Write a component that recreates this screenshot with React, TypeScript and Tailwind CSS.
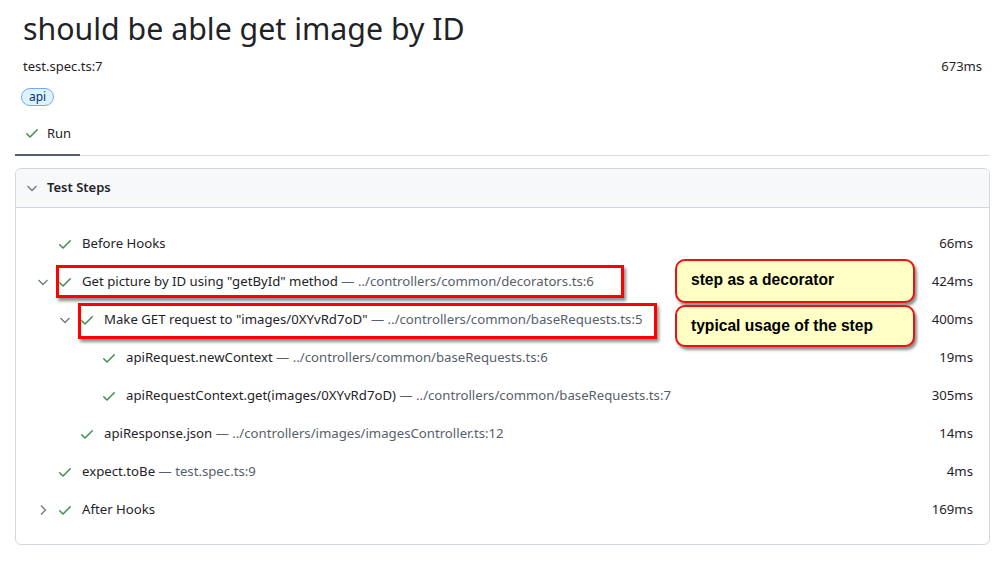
import React from "react";

const Check = ({ className = "" }: { className?: string }) => (
  <svg viewBox="0 0 16 16" width="16" height="16" className={className}>
    <path d="M13.78 4.22a.75.75 0 0 1 0 1.06l-7.25 7.25a.75.75 0 0 1-1.06 0L2.22 9.28a.751.751 0 0 1 1.06-1.06L6 10.94l6.72-6.72a.75.75 0 0 1 1.06 0Z" fill="#3f8f4c" />
  </svg>
);

const ChevronDown = () => (
  <svg viewBox="0 0 16 16" width="16" height="16">
    <path d="M3.5 6l4.5 4.5L12.5 6" fill="none" stroke="#6e7781" strokeWidth="1.3" />
  </svg>
);
const ChevronRight = () => (
  <svg viewBox="0 0 16 16" width="16" height="16">
    <path d="M6 3.5l4.5 4.5L6 12.5" fill="none" stroke="#6e7781" strokeWidth="1.3" />
  </svg>
);

type Step = { depth: number; title: string; loc?: string; dur: string; chev?: "down" | "right" };

const steps: Step[] = [
  { depth: 0, title: "Before Hooks", dur: "66ms" },
  { depth: 0, title: 'Get picture by ID using "getById" method', loc: "../controllers/common/decorators.ts:6", dur: "424ms", chev: "down" },
  { depth: 1, title: 'Make GET request to "images/0XYvRd7oD"', loc: "../controllers/common/baseRequests.ts:5", dur: "400ms", chev: "down" },
  { depth: 2, title: "apiRequest.newContext", loc: "../controllers/common/baseRequests.ts:6", dur: "19ms" },
  { depth: 2, title: "apiRequestContext.get(images/0XYvRd7oD)", loc: "../controllers/common/baseRequests.ts:7", dur: "305ms" },
  { depth: 1, title: "apiResponse.json", loc: "../controllers/images/imagesController.ts:12", dur: "14ms" },
  { depth: 0, title: "expect.toBe", loc: "test.spec.ts:9", dur: "4ms" },
  { depth: 0, title: "After Hooks", dur: "169ms", chev: "right" },
];

export default function App() {
  return (
    <div className="min-h-[565px] bg-white pl-[15px] pr-[8px] pt-[8px] text-[#1f2328]" style={{ fontFamily: "'Noto Sans', 'Open Sans', sans-serif" }}>
      <div className="px-[8px]">
        <h1 className="text-[30.3px] leading-[42px] font-normal text-[#1f2328]">should be able get image by ID</h1>
        <div className="mt-[6px] flex justify-between text-[13px] leading-[20px]">
          <span>test.spec.ts:7</span>
          <span>673ms</span>
        </div>
        <div className="mt-[12px] -ml-[2px] flex">
          <span className="rounded-full border border-[#76a9fa] bg-[#ddf4ff] px-[7px] text-[12px] leading-[16px] text-[#0a3069]">api</span>
        </div>
      </div>
      <div className="mt-[9px] flex border-b border-[#d8dee4]">
        <div className="-mb-px flex items-center gap-[7px] border-b-2 border-[#57606a] pl-[9px] pr-[9px] pb-[11px] pt-[8px] text-[13px] leading-[20px]">
          <Check />
          <span>Run</span>
        </div>
      </div>
      <div className="relative mt-[12px] rounded-[6px] border border-[#d0d7de]">
        <div className="flex h-[39px] items-center gap-[7px] rounded-t-[6px] border-b border-[#d0d7de] bg-[#f6f8fa] pl-[8px] text-[13px] font-semibold">
          <ChevronDown />
          <span>Test Steps</span>
        </div>
        <div className="pt-[17px] pb-[15px]">
          {steps.map((s, i) => (
            <div key={i} className="flex h-[38px] items-center pr-[16px] text-[13.2px]" style={{ paddingLeft: 16 + s.depth * 22 }}>
              <span className="flex w-[22px] justify-center">
                {s.chev === "down" ? <ChevronDown /> : s.chev === "right" ? <ChevronRight /> : null}
              </span>
              <span className="flex w-[22px] justify-center"><Check /></span>
              <span className="ml-[6px] flex-1 whitespace-nowrap">
                {s.title}
                {s.loc && <span className="text-[#57606a]"> — {s.loc}</span>}
              </span>
              <span className="text-[#1f2328]">{s.dur}</span>
            </div>
          ))}
        </div>
        <div className="pointer-events-none absolute left-[40px] top-[96px] h-[33px] w-[568px] border-[3px] border-[#ff0000] shadow-[2px_3px_3px_rgba(0,0,0,0.45)]" />
        <div className="pointer-events-none absolute left-[62px] top-[134px] h-[36px] w-[579px] border-[3px] border-[#ff0000] shadow-[2px_3px_3px_rgba(0,0,0,0.45)]" />
        <div className="absolute left-[659px] top-[90px] flex h-[44px] w-[240px] items-center rounded-[10px] border-2 border-[#ee1111] bg-[#ffffc6] pl-[14px] pb-[2px] text-[15.6px] font-bold text-black shadow-[2px_3px_3px_rgba(0,0,0,0.45)]" style={{ fontFamily: "'Liberation Sans', Arial, sans-serif" }}>
          step as a decorator
        </div>
        <div className="absolute left-[659px] top-[136px] flex h-[42px] w-[240px] items-center rounded-[10px] border-2 border-[#ee1111] bg-[#ffffc6] pl-[14px] text-[15.6px] font-bold text-black shadow-[2px_3px_3px_rgba(0,0,0,0.45)]" style={{ fontFamily: "'Liberation Sans', Arial, sans-serif" }}>
          typical usage of the step
        </div>
      </div>
    </div>
  );
}
